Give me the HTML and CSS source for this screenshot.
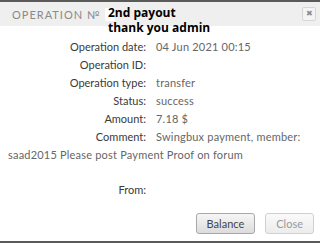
FILE: index.html
```html
<!DOCTYPE html>
<html lang="en">
<head>
  <meta charset="UTF-8">
  <title>Operation</title>
  <link rel="stylesheet" href="styles.css">
</head>
<body>
  <div class="dialog">
    <div class="dialog-head">
      <span class="dialog-title">Operation №</span>
      <span class="redact"></span>
      <button class="head-close">&#10006;</button>
      <div class="note">2nd payout<br>thank you admin</div>
    </div>
    <div class="dialog-body">
      <div class="row"><span class="label">Operation date:</span><span class="value">04 Jun 2021 00:15</span></div>
      <div class="row"><span class="label">Operation ID:</span><span class="value"></span></div>
      <div class="row"><span class="label">Operation type:</span><span class="value">transfer</span></div>
      <div class="row"><span class="label">Status:</span><span class="value">success</span></div>
      <div class="row"><span class="label">Amount:</span><span class="value">7.18 $</span></div>
      <div class="row"><span class="label">Comment:</span><span class="value">Swingbux payment, member: saad2015 Please post Payment Proof on forum</span></div>
      <div class="row from"><span class="label">From:</span><span class="value"></span></div>
    </div>
    <div class="dialog-foot">
      <button class="btn">Balance</button>
      <button class="btn btn-off">Close</button>
    </div>
  </div>
</body>
</html>
```

FILE: styles.css
```css
body {
	margin: 0;
	background: #fff;
	font-family: Lato, "Liberation Sans", sans-serif;
}

.dialog {
	border-top: 2px solid #5a5a5a;
	border-bottom: 2px solid #5a5a5a;
	height: 239px;
	display: flex;
	flex-direction: column;
}

.dialog-head {
	position: relative;
	display: flex;
	align-items: center;
	height: 24px;
	padding: 0 4px 0 12px;
	background: #efefef;
}

.dialog-title {
	font-size: 11px;
	letter-spacing: 1px;
	color: #8a8a8a;
	text-transform: uppercase;
}

.redact {
	width: 10px;
	height: 13px;
	margin-left: 4px;
	background: #fff;
}

.head-close {
	margin-left: auto;
	width: 14px;
	height: 14px;
	padding: 0;
	border: 1px solid #d6d6d6;
	border-radius: 2px;
	background: #f4f4f4;
	color: #8c8c8c;
	font-size: 8px;
	line-height: 12px;
}

.note {
	position: absolute;
	left: 108px;
	top: 3px;
	font-family: "Open Sans", "Liberation Sans", sans-serif;
	font-weight: bold;
	font-size: 12px;
	line-height: 15px;
	color: #000;
}

.dialog-body {
	padding: 12px 8px 0;
	font-size: 11px;
	line-height: 18px;
	color: #555;
}

.row {
	min-height: 18px;
}

.label {
	display: inline-block;
	width: 138px;
	margin-right: 10px;
	text-align: right;
	color: #3a3a3a;
}

.value {
	color: #666;
	letter-spacing: 0.2px;
}

.from {
	margin-top: 17px;
}

.dialog-foot {
	margin-top: auto;
	display: flex;
	justify-content: flex-end;
	gap: 10px;
	padding: 0 6px 7px;
}

.btn {
	height: 21px;
	padding: 0 10px;
	border: 1px solid #a8a8a8;
	border-radius: 3px;
	background: linear-gradient(#f6f6f6, #dcdcdc);
	font-family: inherit;
	font-size: 11px;
	color: #444;
}

.btn-off {
	border-color: #d0d0d0;
	background: linear-gradient(#fafafa, #ececec);
	color: #999;
}
```
